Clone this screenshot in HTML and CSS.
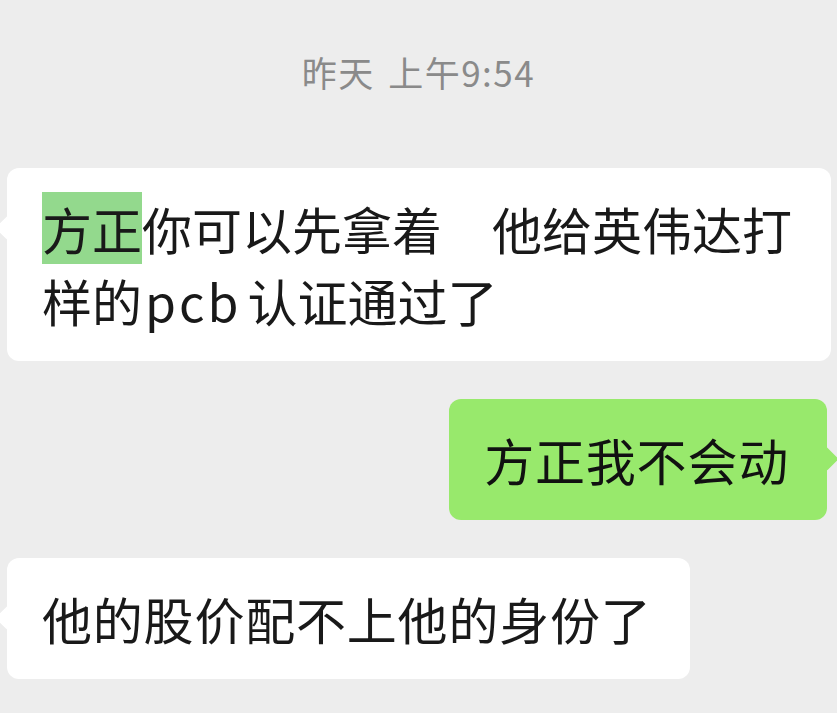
FILE: index.html
```html
<!DOCTYPE html>
<html lang="zh-CN">
<head>
    <meta charset="UTF-8">
    <meta name="viewport" content="width=device-width, initial-scale=1.0">
    <title>聊天</title>
    <link rel="stylesheet" href="styles.css">
</head>
<body>
    <div class="chat">
        <div class="time">昨天 上午9:54</div>

        <div class="msg msg-left">
            <div class="bubble bubble-long"><span class="mark">方正</span>你可以先拿着　他给英伟达打样的<span class="latin">pcb</span>认证通过了</div>
        </div>

        <div class="msg msg-right">
            <div class="bubble bubble-me">方正我不会动</div>
        </div>

        <div class="msg msg-left">
            <div class="bubble">他的股价配不上他的身份了</div>
        </div>
    </div>
</body>
</html>
```

FILE: styles.css
```css
body {
    margin: 0;
    padding: 0;
    background-color: #ededed;
    font-family: "Noto Sans CJK SC", "Noto Sans", sans-serif;
    color: #191919;
    width: 837px;
    height: 713px;
    overflow: hidden;
}

.chat {
    display: flex;
    flex-direction: column;
    padding-top: 47px;
}

.time {
    text-align: center;
    font-size: 35px;
    line-height: 50px;
    letter-spacing: 1.5px;
    word-spacing: 4px;
    color: #8a8a8a;
    margin-bottom: 71px;
}

.msg {
    display: flex;
    margin-bottom: 38px;
}

.msg-left {
    justify-content: flex-start;
    padding-left: 7px;
}

.msg-right {
    justify-content: flex-end;
    padding-right: 10px;
}

.bubble {
    position: relative;
    max-width: 824px;
    box-sizing: border-box;
    padding: 24px 38px 25px 35px;
    font-size: 50px;
    line-height: 72px;
    letter-spacing: 0.8px;
    background-color: #ffffff;
    border-radius: 12px;
}

.bubble-long {
    letter-spacing: 0;
}

/* little tail */
.bubble::before {
    content: "";
    position: absolute;
    top: 51px;
    left: -8px;
    width: 18px;
    height: 18px;
    background-color: inherit;
    border-radius: 3px;
    transform: rotate(45deg);
}

.bubble-me {
    background-color: #98e96c;
    color: #111;
}

.bubble-me::before {
    left: auto;
    right: -8px;
}

.mark {
    background-color: #93d98d;
}

.latin {
    letter-spacing: 3px;
    padding: 0 6px 0 3px;
}
```
